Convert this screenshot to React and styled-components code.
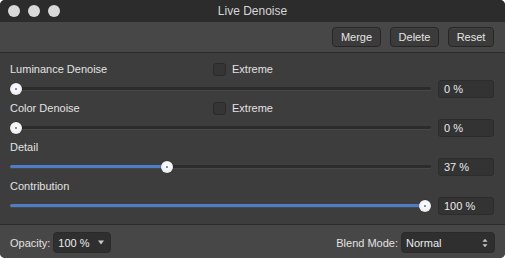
import React from "react";
import styled, { createGlobalStyle } from "styled-components";

const Global = createGlobalStyle`
  html, body {
    margin: 0;
    padding: 0;
    background: #ffffff;
  }
  body {
    font-family: "Liberation Sans", Arial, sans-serif;
    -webkit-font-smoothing: antialiased;
  }
`;

const Window = styled.div`
  width: 505px;
  height: 258px;
  display: flex;
  flex-direction: column;
  background: #3d3d3d;
  border-radius: 5px;
  overflow: hidden;
  color: #e2e2e2;
  font-size: 11px;
`;

const TitleBar = styled.div`
  height: 22px;
  flex: none;
  display: flex;
  align-items: center;
  position: relative;
  background: #2c2c2c;
  padding-left: 8px;
  gap: 8px;
`;

const Light = styled.span`
  width: 12px;
  height: 12px;
  border-radius: 50%;
  background: #d9d9d9;
`;

const Title = styled.div`
  position: absolute;
  left: 0;
  right: 0;
  text-align: center;
  font-size: 12px;
  color: #d6d6d6;
  pointer-events: none;
`;

const Toolbar = styled.div`
  height: 29px;
  flex: none;
  display: flex;
  align-items: center;
  justify-content: flex-end;
  gap: 9px;
  padding: 0 11px 1px 0;
  background: #474747;
  border-bottom: 1px solid #2b2b2b;
`;

const Button = styled.button`
  height: 20px;
  padding: 0;
  width: ${(p) => p.w}px;
  border-radius: 4px;
  border: 1px solid #262626;
  background: #3b3b3b;
  color: #e4e4e4;
  font-family: inherit;
  font-size: 11px;
  box-shadow: inset 0 1px 0 rgba(255, 255, 255, 0.04);
`;

const Content = styled.div`
  flex: 1;
  display: flex;
  flex-direction: column;
  padding: 6px 11px 0 10px;
`;

const Group = styled.div`
  display: flex;
  flex-direction: column;
`;

const Header = styled.div`
  height: 20px;
  display: grid;
  grid-template-columns: 203px auto;
  align-items: center;
`;

const Check = styled.label`
  display: flex;
  align-items: center;
  gap: 6px;
`;

const Box = styled.span`
  width: 11px;
  height: 11px;
  border-radius: 3px;
  background: #353535;
  border: 1px solid #2a2a2a;
`;

const SliderRow = styled.div`
  height: 19px;
  display: flex;
  align-items: center;
  gap: 7px;
`;

const Track = styled.div`
  flex: 1;
  height: 3px;
  position: relative;
  border-radius: 2px;
  background: #2c2c2c;
  box-shadow: 0 1px 0 rgba(255, 255, 255, 0.06);
`;

const Fill = styled.div`
  position: absolute;
  left: 0;
  top: 0;
  bottom: 0;
  border-radius: 2px;
  background: #4e7cc6;
`;

const Knob = styled.div`
  position: absolute;
  top: 50%;
  width: 12px;
  height: 12px;
  margin-top: -6px;
  border-radius: 50%;
  background: radial-gradient(circle at 50% 40%, #ffffff 0%, #f2f2f2 55%, #d6d6d6 100%);
  box-shadow: 0 0 1px rgba(0, 0, 0, 0.6);
  display: flex;
  align-items: center;
  justify-content: center;

  &::after {
    content: "";
    width: 2px;
    height: 2px;
    border-radius: 50%;
    background: #3a6fd0;
  }
`;

const Value = styled.div`
  width: 56px;
  height: 18px;
  box-sizing: border-box;
  padding-left: 5px;
  display: flex;
  align-items: center;
  border-radius: 3px;
  background: #333333;
  border: 1px solid #2c2c2c;
  color: #e8e8e8;
`;

const BottomBar = styled.div`
  height: 33px;
  flex: none;
  display: flex;
  align-items: center;
  justify-content: space-between;
  padding: 0 10px;
  background: #474747;
  border-top: 1px solid #2b2b2b;
`;

const Field = styled.div`
  display: flex;
  align-items: center;
  gap: 3px;
  padding-top: 2px;
`;

const Select = styled.div`
  width: ${(p) => p.w}px;
  height: 21px;
  box-sizing: border-box;
  display: flex;
  align-items: center;
  justify-content: space-between;
  padding: 0 6px 0 4px;
  border-radius: 4px;
  background: #2f2f2f;
  border: 1px solid #2a2a2a;
  color: #ececec;
`;

const Slider = ({ value }) => {
  const left = `calc(${value / 100} * (100% - 12px))`;
  return (
    <SliderRow>
      <Track>
        {value > 0 && <Fill style={{ width: `calc(${left} + 6px)` }} />}
        <Knob style={{ left }} />
      </Track>
      <Value>{value} %</Value>
    </SliderRow>
  );
};

const params = [
  { name: "Luminance Denoise", value: 0, extreme: true },
  { name: "Color Denoise", value: 0, extreme: true },
  { name: "Detail", value: 37 },
  { name: "Contribution", value: 100 },
];

export default function App() {
  return (
    <>
      <Global />
      <Window>
        <TitleBar>
          <Light />
          <Light />
          <Light />
          <Title>Live Denoise</Title>
        </TitleBar>
        <Toolbar>
          <Button w={49}>Merge</Button>
          <Button w={49}>Delete</Button>
          <Button w={46}>Reset</Button>
        </Toolbar>
        <Content>
          {params.map((p) => (
            <Group key={p.name}>
              <Header>
                <span>{p.name}</span>
                {p.extreme && (
                  <Check>
                    <Box />
                    Extreme
                  </Check>
                )}
              </Header>
              <Slider value={p.value} />
            </Group>
          ))}
        </Content>
        <BottomBar>
          <Field>
            Opacity:
            <Select w={58}>
              <span>100 %</span>
              <svg width="6" height="5" viewBox="0 0 6 5">
                <path d="M0 0.5h6L3 4.5z" fill="#c8c8c8" />
              </svg>
            </Select>
          </Field>
          <Field>
            Blend Mode:
            <Select w={94}>
              <span>Normal</span>
              <svg width="6" height="10" viewBox="0 0 6 10">
                <path d="M0.5 3.8L3 0.8l2.5 3z" fill="#c8c8c8" />
                <path d="M0.5 6.2L3 9.2l2.5-3z" fill="#c8c8c8" />
              </svg>
            </Select>
          </Field>
        </BottomBar>
      </Window>
    </>
  );
}
